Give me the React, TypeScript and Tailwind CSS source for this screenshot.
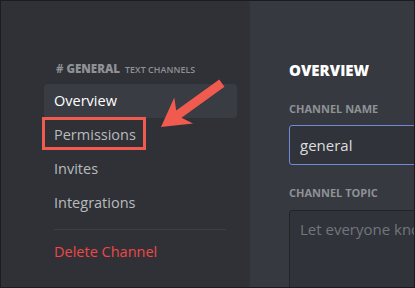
export default function App() {
  const items = ["Overview", "Permissions", "Invites", "Integrations"]

  return (
    <div
      className="relative flex w-[415px] h-[288px] overflow-hidden bg-[#1b1c1f] p-px"
      style={{ fontFamily: '"Open Sans", "Noto Sans", sans-serif' }}
    >
      {/* Sidebar */}
      <div className="w-[249px] shrink-0 bg-[#2f3136] pt-[61px] pl-[43px] pr-[13px]">
        <div className="flex items-baseline gap-[5px] pl-[12px] h-[14px] leading-[14px] text-[#8e9297]">
          <span className="text-[11.5px] font-bold">#</span>
          <span className="text-[11.5px] font-extrabold -ml-[2px]">GENERAL</span>
          <span className="text-[8.8px] font-semibold tracking-[0.1px]">TEXT CHANNELS</span>
        </div>
        <div className="mt-[8px] flex flex-col">
          {items.map((item, i) => (
            <div
              key={item}
              className={`relative h-[34px] leading-[34px] px-[10px] rounded-[4px] text-[14.5px] font-medium ${
                i === 0 ? "bg-[#393c43] text-white" : "text-[#b9bbbe]"
              }`}
            >
              {item}
              {item === "Permissions" && (
                <div className="absolute left-[-2px] top-[-1px] w-[104px] h-[33px] border-[3px] border-[#f05a4f]" />
              )}
            </div>
          ))}
        </div>
        <div className="mt-[9px] ml-[10px] w-[172px] h-px bg-[#3d3f45]" />
        <div className="mt-[5px] h-[34px] leading-[34px] px-[10px] text-[14.5px] font-medium text-[#f04747]">
          Delete Channel
        </div>
      </div>

      {/* Main */}
      <div className="flex-1 overflow-hidden bg-[#36393f] pt-[59px] pl-[39px]">
        <div className="h-[20px] leading-[20px] text-[15px] font-extrabold text-white">OVERVIEW</div>
        <div className="mt-[22px] h-[14px] leading-[14px] text-[11px] font-bold text-[#8e9297]">CHANNEL NAME</div>
        <div className="mt-[9px] w-[200px] h-[40px] rounded-[3px] border border-[#7289da] bg-[#303339] pl-[10px] leading-[38px] text-[15px] text-[#dcddde]">
          general
        </div>
        <div className="mt-[21px] h-[14px] leading-[14px] text-[11px] font-bold text-[#8e9297]">CHANNEL TOPIC</div>
        <div className="mt-[10px] w-[200px] h-[100px] overflow-hidden rounded-[3px] border border-[#232428] bg-[#303339] pl-[10px] pt-[8px] leading-[20px] text-[15px] text-[#72767d] whitespace-nowrap">
          Let everyone know how to use this channel!
        </div>
      </div>

      {/* Annotation arrow */}
      <svg className="pointer-events-none absolute left-0 top-0" width="415" height="288" viewBox="0 0 415 288">
        <polygon
          points="161,127 174.3,97.6 176.2,110.5 219.2,79.5 224.5,86.8 181.5,117.8 193.1,123.6"
          fill="#f05a4f"
        />
      </svg>
    </div>
  )
}
